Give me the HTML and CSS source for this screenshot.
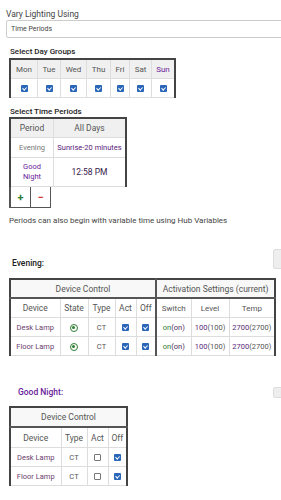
FILE: index.html
```html
<!DOCTYPE html>
<html lang="en">
<head>
    <meta charset="UTF-8">
    <meta name="viewport" content="width=device-width, initial-scale=1.0">
    <title>Vary Lighting</title>
    <link rel="stylesheet" href="styles.css">
</head>
<body>
    <div class="page">
        <div class="field-label">Vary Lighting Using</div>
        <div class="select">Time Periods</div>

        <div class="section-title">Select Day Groups</div>
        <table class="grid days">
            <tr class="head">
                <th>Mon</th><th>Tue</th><th>Wed</th><th>Thu</th><th>Fri</th><th>Sat</th><th class="sun">Sun</th>
            </tr>
            <tr>
                <td><span class="cb"></span></td>
                <td><span class="cb"></span></td>
                <td><span class="cb"></span></td>
                <td><span class="cb"></span></td>
                <td><span class="cb"></span></td>
                <td><span class="cb"></span></td>
                <td><span class="cb"></span></td>
            </tr>
        </table>

        <div class="section-title second">Select Time Periods</div>
        <table class="grid periods">
            <tr class="head">
                <th>Period</th><th>All Days</th>
            </tr>
            <tr>
                <td class="period-name">Evening</td>
                <td class="period-time">Sunrise-20 minutes</td>
            </tr>
            <tr class="tall">
                <td class="period-name active">Good<br>Night</td>
                <td class="period-time strong">12:58 PM</td>
            </tr>
        </table>
        <div class="period-buttons">
            <button class="add">+</button>
            <button class="remove">&minus;</button>
        </div>

        <p class="note">Periods can also begin with variable time using Hub Variables</p>

        <div class="group-head">
            <span class="group-name">Evening:</span>
            <span class="side-btn"></span>
        </div>
        <table class="grid devices wide">
            <colgroup>
                <col><col><col><col><col><col><col><col>
            </colgroup>
            <tr class="head">
                <th colspan="5">Device Control</th>
                <th colspan="3" class="split">Activation Settings (current)</th>
            </tr>
            <tr class="subhead">
                <th>Device</th><th>State</th><th>Type</th><th>Act</th><th>Off</th>
                <th class="split">Switch</th><th>Level</th><th>Temp</th>
            </tr>
            <tr>
                <td class="device">Desk Lamp</td>
                <td><span class="radio"></span></td>
                <td>CT</td>
                <td><span class="cb"></span></td>
                <td><span class="cb"></span></td>
                <td class="split"><span class="on">on</span><span class="cur">(on)</span></td>
                <td><span class="val">100</span>(100)</td>
                <td><span class="val">2700</span>(2700)</td>
            </tr>
            <tr>
                <td class="device">Floor Lamp</td>
                <td><span class="radio"></span></td>
                <td>CT</td>
                <td><span class="cb"></span></td>
                <td><span class="cb"></span></td>
                <td class="split"><span class="on">on</span><span class="cur">(on)</span></td>
                <td><span class="val">100</span>(100)</td>
                <td><span class="val">2700</span>(2700)</td>
            </tr>
        </table>

        <div class="group-head small">
            <span class="group-name purple">Good Night:</span>
            <span class="side-btn"></span>
        </div>
        <table class="grid devices narrow">
            <colgroup>
                <col><col><col><col>
            </colgroup>
            <tr class="head">
                <th colspan="4">Device Control</th>
            </tr>
            <tr class="subhead">
                <th>Device</th><th>Type</th><th>Act</th><th>Off</th>
            </tr>
            <tr>
                <td class="device">Desk Lamp</td>
                <td>CT</td>
                <td><span class="cb empty"></span></td>
                <td><span class="cb"></span></td>
            </tr>
            <tr>
                <td class="device">Floor Lamp</td>
                <td>CT</td>
                <td><span class="cb empty"></span></td>
                <td><span class="cb"></span></td>
            </tr>
        </table>
    </div>
</body>
</html>
```

FILE: styles.css
```css
body {
    margin: 0;
    font-family: Roboto, "Liberation Sans", sans-serif;
    color: #333;
    background: #fff;
    overflow-x: hidden;
}

.page {
    padding: 8px 0 0 6px;
}

.field-label {
    font-size: 8.5px;
    line-height: 12px;
    color: #444;
}

.select {
    box-sizing: border-box;
    height: 18px;
    width: 290px;
    border: 1px solid #ccc;
    border-radius: 2px;
    padding-left: 4px;
    font-size: 7px;
    line-height: 16px;
    color: #444;
}

.section-title {
    margin: 8px 0 0 4px;
    font-size: 8px;
    font-weight: 500;
    line-height: 12px;
    color: #222;
}

.section-title.second {
    line-height: 11px;
}

/* shared table look */
.grid {
    border-collapse: collapse;
    table-layout: fixed;
    margin-left: 3px;
    border: 2px solid #444;
    border-bottom: none;
    font-size: 7.5px;
    color: #555;
}

.grid th,
.grid td {
    border: 1px solid #ddd;
    padding: 0;
    height: 18px;
    text-align: center;
    font-weight: normal;
    white-space: nowrap;
    overflow: hidden;
}

.grid .head th {
    background: #f0f0f0;
    font-size: 8.5px;
    color: #555;
}

/* day groups */
.days {
    width: 157px;
}

.days th:nth-child(1) { width: 26px; }
.days th:nth-child(2) { width: 22px; }
.days th:nth-child(3) { width: 25px; }
.days th:nth-child(4) { width: 23px; }
.days th:nth-child(5) { width: 18px; }
.days th:nth-child(6) { width: 21px; }
.days th:nth-child(7) { width: 22px; }

.days .head th {
    font-size: 8px;
}

.days .head .sun {
    color: #6a1b9a;
}

/* time periods */
.periods {
    width: 113px;
    border-bottom: 1px solid #666;
}

.periods th:nth-child(1) { width: 42px; }
.periods th:nth-child(2) { width: 71px; }

.periods td {
    height: 19px;
}

.periods .tall td {
    height: 28px;
}

.period-name {
    color: #777;
    white-space: normal;
    line-height: 10px;
}

.period-name.active {
    color: #6a1b9a;
}

.period-time {
    color: #5a1a7a;
    font-weight: 500;
}

.period-time.strong {
    color: #3a1a4a;
    font-size: 8.5px;
}

.period-buttons {
    display: flex;
    margin-left: 3px;
}

.period-buttons button {
    box-sizing: border-box;
    width: 21px;
    height: 21px;
    padding: 0;
    border: 1px solid #555;
    border-top: none;
    background: #fff;
    font-family: inherit;
    font-size: 11px;
    font-weight: bold;
    line-height: 19px;
}

.period-buttons .add {
    width: 22px;
    border-left-width: 2px;
    color: #2e7d32;
}

.period-buttons .remove {
    width: 20px;
    border-left: none;
    color: #d04040;
}

.note {
    margin: 7px 0 0 3px;
    font-size: 8px;
    line-height: 12px;
    color: #444;
}

/* device groups */
.group-head {
    display: flex;
    align-items: flex-end;
    height: 20px;
    margin-top: 22px;
}

.group-head.small {
    align-items: center;
    height: 14px;
    margin-top: 29px;
}

.group-name {
    margin-left: 6px;
    font-size: 8.5px;
    font-weight: 500;
    line-height: 12px;
    color: #222;
}

.group-name.purple {
    margin-left: 12px;
    color: #6a1b9a;
}

.side-btn {
    box-sizing: border-box;
    width: 12px;
    height: 20px;
    margin-left: auto;
    margin-right: -4px;
    background: #eee;
    border: 1px solid #ddd;
    border-radius: 2px;
}

.group-head.small .side-btn {
    height: 11px;
}

.devices {
    margin-top: 9px;
}

.group-head.small + .devices {
    margin-top: 7px;
}

.devices .head th {
    background: #f8f8f8;
    border-bottom: 2px solid #555;
    height: 17px;
}

.devices .split {
    border-left: 2px solid #555;
}

.devices .subhead th {
    color: #555;
    font-size: 8.5px;
}

.wide {
    width: 265px;
}

.wide col:nth-child(1) { width: 50px; }
.wide col:nth-child(2) { width: 28px; }
.wide col:nth-child(3) { width: 27px; }
.wide col:nth-child(4) { width: 21px; }
.wide col:nth-child(5) { width: 20px; }
.wide col:nth-child(6) { width: 35px; }
.wide col:nth-child(7) { width: 38px; }
.wide col:nth-child(8) { width: 46px; }

.wide .subhead th:nth-child(6),
.wide .subhead th:nth-child(7),
.wide .subhead th:nth-child(8) {
    font-size: 8px;
}

.narrow {
    width: 117px;
}

.narrow col:nth-child(1) { width: 51px; }
.narrow col:nth-child(2) { width: 26px; }
.narrow col:nth-child(3) { width: 21px; }
.narrow col:nth-child(4) { width: 19px; }

.narrow .head th {
    height: 18px;
}

.narrow .subhead th {
    height: 19px;
}

.device {
    color: #6b3d6e;
}

.on {
    color: #2e7d32;
}

.cur {
    color: #4a2a5a;
}

.val {
    color: #5a2a7a;
}

/* controls */
.cb {
    display: inline-block;
    box-sizing: border-box;
    width: 7px;
    height: 7px;
    border-radius: 1px;
    background: #2a66b8;
    vertical-align: middle;
    position: relative;
}

.cb::after {
    content: "";
    position: absolute;
    left: 2.2px;
    top: 0.6px;
    width: 1.6px;
    height: 3.4px;
    border: solid #fff;
    border-width: 0 1px 1px 0;
    transform: rotate(45deg);
}

.cb.empty {
    background: #fff;
    border: 1px solid #777;
}

.cb.empty::after {
    display: none;
}

.radio {
    display: inline-block;
    box-sizing: border-box;
    width: 8px;
    height: 8px;
    border: 1.2px solid #2e7d32;
    border-radius: 50%;
    vertical-align: middle;
    position: relative;
}

.radio::after {
    content: "";
    position: absolute;
    left: 1.4px;
    top: 1.4px;
    width: 3px;
    height: 3px;
    border-radius: 50%;
    background: #2e7d32;
}
```
